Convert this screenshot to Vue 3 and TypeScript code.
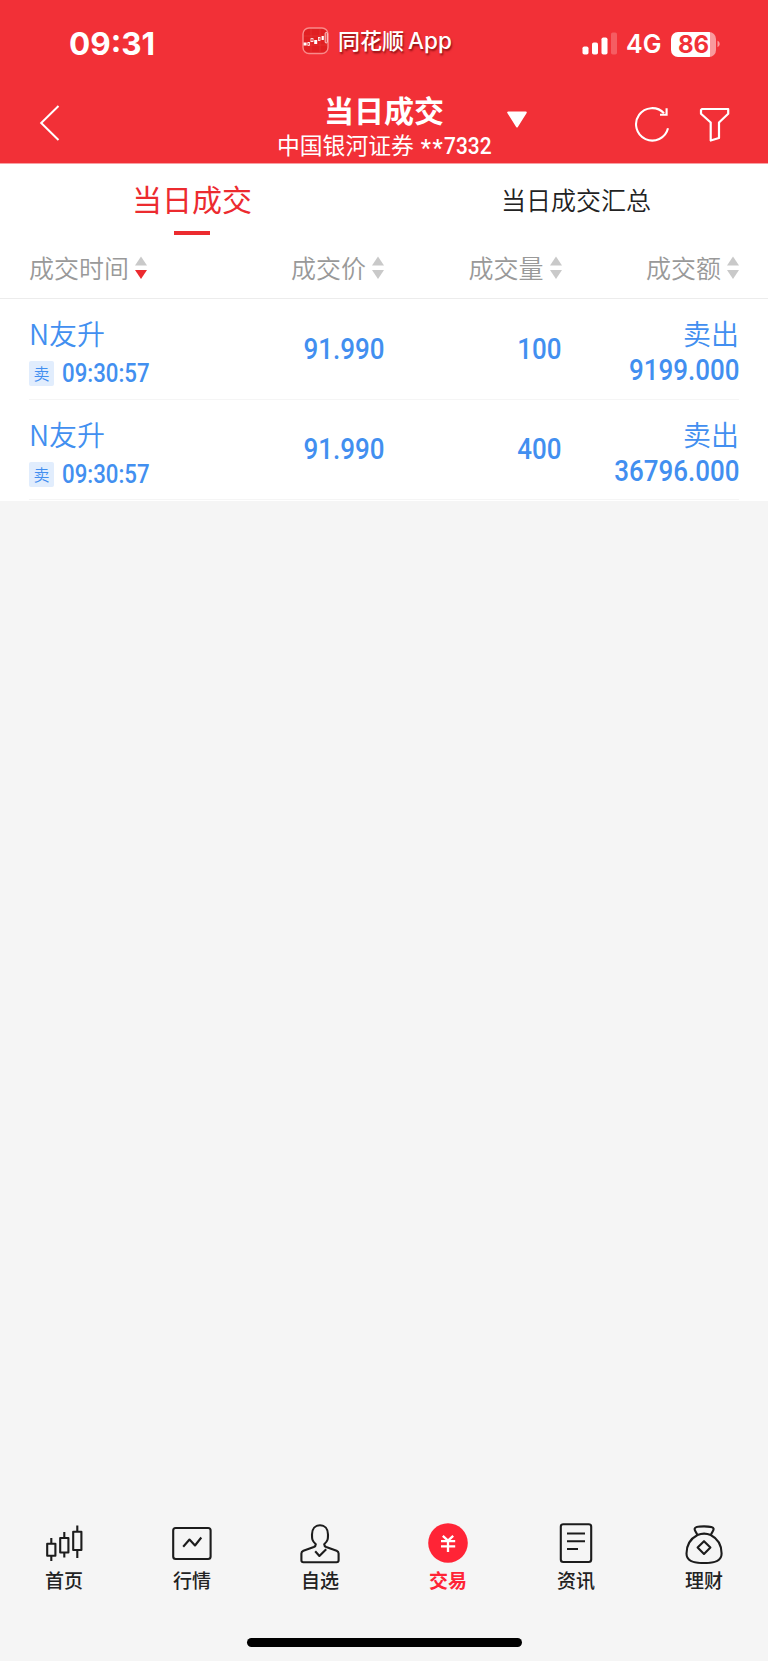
<script setup lang="ts">
import { ref } from 'vue'

interface Column {
  key: string
  label: string
}

interface Trade {
  id: number
  name: string
  side: string
  time: string
  price: string
  volume: string
  direction: string
  amount: string
}

interface NavItem {
  key: string
  label: string
}

const columns: Column[] = [
  { key: 'time', label: '成交时间' },
  { key: 'price', label: '成交价' },
  { key: 'volume', label: '成交量' },
  { key: 'amount', label: '成交额' },
]

const trades: Trade[] = [
  { id: 1, name: 'N友升', side: '卖', time: '09:30:57', price: '91.990', volume: '100', direction: '卖出', amount: '9199.000' },
  { id: 2, name: 'N友升', side: '卖', time: '09:30:57', price: '91.990', volume: '400', direction: '卖出', amount: '36796.000' },
]

const tabs: string[] = ['当日成交', '当日成交汇总']

const navItems: NavItem[] = [
  { key: 'home', label: '首页' },
  { key: 'market', label: '行情' },
  { key: 'watch', label: '自选' },
  { key: 'trade', label: '交易' },
  { key: 'news', label: '资讯' },
  { key: 'wealth', label: '理财' },
]

const activeTab = ref(0)
const activeNav = ref('trade')
const sortKey = ref('time')
</script>

<template>
  <div class="screen">
    <header class="header">
      <div class="status">
        <div class="clock">09:31</div>
        <div class="source">
          <svg class="app-icon" width="28" height="28" viewBox="0 0 28 28">
            <rect x="1" y="1" width="25" height="25.5" rx="6" fill="#e01f22" stroke="#f98a8a" stroke-width="1.4" />
            <path d="M2 9H25M2 18H25M9 2V26M18 2V26" stroke="#e8393b" stroke-width=".6" />
            <g fill="#fff">
              <rect x="1.6" y="15.5" width="3" height="3" />
              <rect x="12.2" y="13" width="3" height="4" />
              <rect x="19.6" y="9" width="2.2" height="4" />
            </g>
            <g fill="none" stroke="#fff" stroke-width=".8">
              <rect x="5.9" y="15.5" width="1.6" height="3" />
              <rect x="9" y="11.6" width="2" height="3" />
              <rect x="16.4" y="10.5" width="1.6" height="3" />
              <rect x="23.2" y="5.5" width="2" height="10.5" rx="1" />
            </g>
          </svg>
          <span class="source-cn">同花顺</span><span class="source-en">App</span>
        </div>
        <div class="indicators">
          <svg class="signal" width="36" height="24" viewBox="0 0 36 24" fill="#fff">
            <rect x="0.5" y="14.5" width="6" height="8" rx="1.8" />
            <rect x="10" y="10.5" width="6" height="12" rx="1.8" />
            <rect x="19.5" y="5.5" width="6" height="17" rx="1.8" />
            <rect x="29" y=".5" width="6" height="22" rx="1.8" opacity=".22" />
          </svg>
          <span class="network">4G</span>
          <div class="battery"><span class="level">86</span></div>
          <svg width="5" height="8" viewBox="0 0 5 8"><path d="M1.5 .8C4.4 2 4.4 6 1.5 7.2Z" fill="#f99a9d" /></svg>
        </div>
      </div>
      <div class="titlebar">
        <svg class="back" width="22" height="38" viewBox="0 0 22 38" fill="none" stroke="#fff" stroke-width="2">
          <path d="M19.5 2L2.2 19L19.5 36" />
        </svg>
        <div class="title-box">
          <h1 class="title">当日成交</h1>
          <p class="account"><span>中国银河证券</span><i class="stars">**</i><span class="account-no">7332</span></p>
        </div>
        <svg class="caret" width="24" height="20" viewBox="0 0 24 20">
          <path d="M3.2 2.5H20.8L12 16.5Z" fill="#fff" stroke="#fff" stroke-width="2" stroke-linejoin="round" />
        </svg>
        <svg class="refresh" width="38" height="38" viewBox="0 0 38 38" fill="none" stroke="#fff" stroke-width="2.1">
          <path d="M35 23.2A16.2 16.2 0 1 1 31 8.2" />
          <path d="M33.6 3.2V9.8H27" />
        </svg>
        <svg class="filter" width="32" height="36" viewBox="0 0 32 36" fill="none" stroke="#fff" stroke-width="2.2" stroke-linejoin="round">
          <path d="M3 2H29.2V6.8L20 15.5V31L11.7 33.5V15.5L2 6.8V3Z" />
        </svg>
      </div>
    </header>

    <main class="content">
      <nav class="tabs">
        <button v-for="(tab, i) in tabs" :key="tab" class="tab" :class="{ active: activeTab === i }" @click="activeTab = i">
          {{ tab }}
        </button>
      </nav>

      <div class="grid head">
        <div v-for="col in columns" :key="col.key" class="head-cell">
          <span class="head-label">{{ col.label }}</span>
          <svg class="sort" width="12" height="24" viewBox="0 0 12 24">
            <path d="M6 .5L12 9.5H0Z" fill="#c9c9c9" />
            <path d="M0 14H12L6 23Z" :fill="sortKey === col.key ? '#ec2b2f' : '#c9c9c9'" />
          </svg>
        </div>
      </div>

      <div class="rows">
        <div v-for="trade in trades" :key="trade.id" class="grid row">
          <div class="stock">
            <div class="name">{{ trade.name }}</div>
            <div class="meta"><span class="badge">{{ trade.side }}</span><span class="time">{{ trade.time }}</span></div>
          </div>
          <div class="num middle">{{ trade.price }}</div>
          <div class="num middle">{{ trade.volume }}</div>
          <div class="total">
            <div class="direction">{{ trade.direction }}</div>
            <div class="num">{{ trade.amount }}</div>
          </div>
        </div>
      </div>
    </main>

    <footer class="bottom">
      <div class="nav">
        <div v-for="item in navItems" :key="item.key" class="nav-item" :class="{ on: activeNav === item.key }">
          <svg class="nav-icon" width="44" height="44" viewBox="0 0 44 44" fill="none" stroke="#1c1c1c" stroke-width="2.1" stroke-linejoin="round">
            <g v-if="item.key === 'home'">
              <path d="M9.3 18V23.5M9.3 35.5V41M22.3 12V18M22.3 32.5V37.5M35.3 5.5V11.5M35.3 30V38" />
              <rect x="5.2" y="23.7" width="8.2" height="12" />
              <rect x="18.2" y="18" width="8.2" height="14.5" />
              <rect x="31.2" y="11.8" width="8.2" height="18.2" />
            </g>
            <g v-else-if="item.key === 'market'">
              <rect x="3.2" y="8" width="37.4" height="31" rx="2.5" />
              <path d="M13.2 26.8L19.5 19.5L25 25.5L31.3 17.5" />
            </g>
            <g v-else-if="item.key === 'watch'">
              <path d="M17.8 24.2C13.8 20.8 14 18.5 14 14.5C14 8.8 17.3 5.2 22 5.2S30 8.8 30 14.5C30 18.5 30.2 20.8 26.2 24.2C26.2 26 27 26.5 28.2 27L38.6 30.8C40 31.4 40.6 32.2 40.6 33.6V40.2Q40.6 42.2 38.6 42.2H5.4Q3.4 42.2 3.4 40.2V33.6C3.4 32.2 4 31.4 5.4 30.8L15.8 27C17 26.5 17.8 26 17.8 24.2Z" />
              <path d="M17.2 31.2L21.4 36L28.2 29.2" />
            </g>
            <g v-else-if="item.key === 'trade'">
              <circle cx="22" cy="23" r="19.8" fill="#ff2436" stroke="none" />
              <path d="M16.8 15.8L22 20.7L27.2 15.8M15 21.2H29.2M15 26.3H29.2M22 20.5V32" stroke="#fff" stroke-width="2.3" stroke-linejoin="miter" />
            </g>
            <g v-else-if="item.key === 'news'">
              <rect x="6.8" y="4.2" width="30.4" height="37.8" rx="2.5" />
              <path d="M13 13.5H31M13 21.3H31M13 29H24" />
            </g>
            <g v-else>
              <path d="M15.5 15C14.6 12.6 12.4 10.7 12.6 8.8C13 5.6 31 5.6 31.6 8.8C31.8 10.7 29.6 12.6 28.7 15C25 13.4 19.2 13.4 15.5 15C8.5 18.7 4.5 25.5 4.5 33.5C4.5 40.5 10 43 22 43S39.6 40.5 39.6 33.5C39.6 25.5 35.8 18.7 28.7 15" />
              <path d="M22 21.2L28.4 27.6L22 34L15.6 27.6Z" />
            </g>
          </svg>
          <span class="nav-label">{{ item.label }}</span>
        </div>
      </div>
      <div class="home-indicator"></div>
    </footer>
  </div>
</template>

<style>
body {
  margin: 0;
  background: #fff;
}
</style>

<style scoped>
.screen {
  width: 768px;
  height: 1661px;
  display: flex;
  flex-direction: column;
  background: #f5f5f5;
  font-family: 'Noto Sans CJK SC', sans-serif;
  overflow: hidden;
}

.header {
  height: 163px;
  flex: none;
  background: #f23037;
  color: #fff;
  border-bottom: 1px solid #f8a0a3;
  box-sizing: content-box;
}

.status {
  height: 86px;
  display: grid;
  grid-template-columns: 302px 1fr 187px;
}

.clock {
  padding: 25px 0 0 69px;
  font: 700 31.5px/38px Inter, sans-serif;
}

.source {
  display: flex;
  align-items: flex-start;
  height: 32px;
  margin-top: 25px;
  text-shadow: 1px 2px 2px rgba(90, 0, 0, 0.65);
  font-weight: 500;
}

.app-icon {
  flex: none;
  margin-top: 2px;
}

.source-cn {
  margin-left: 8px;
  font-size: 22px;
  line-height: 28px;
}

.source-en {
  margin-left: 4px;
  font: 500 22.5px/32px Inter, sans-serif;
}

.indicators {
  display: flex;
  align-items: center;
  height: 32px;
  margin-top: 28px;
}

.signal {
  margin-left: 1px;
}

.network {
  width: 53px;
  padding-left: 8px;
  box-sizing: border-box;
  font: 600 25px/32px Inter, sans-serif;
}

.battery {
  width: 45px;
  height: 25px;
  border-radius: 7px;
  background: linear-gradient(to right, #fff 39px, #f99a9d 39px);
  display: flex;
  justify-content: center;
}

.level {
  color: #f23037;
  font: 700 24px/25px Inter, sans-serif;
}

.titlebar {
  height: 77px;
  display: flex;
  align-items: flex-start;
}

.back {
  margin: 18px 0 0 39px;
}

.title-box {
  width: 232px;
  margin-left: 207px;
}

.title {
  margin: 5px 0 0;
  font-size: 30px;
  line-height: 36px;
  font-weight: 700;
  text-align: center;
}

.account {
  margin: 2px 0 0 9px;
  display: flex;
  font-size: 22.8px;
  line-height: 32px;
  white-space: nowrap;
}

.stars {
  margin: 4px 0 0 7px;
  font: 500 23px/32px Roboto, sans-serif;
  letter-spacing: 1.5px;
}

.account-no {
  font: 500 23.5px/34px Roboto, sans-serif;
  transform: scaleX(0.89);
  transform-origin: left;
}

.caret {
  margin: 24px 0 0 5px;
}

.refresh {
  margin: 19px 0 0 104px;
}

.filter {
  margin: 21px 0 0 28px;
}

.content {
  flex: none;
  background: #fff;
}

.tabs {
  height: 74px;
  display: grid;
  grid-template-columns: 1fr 1fr;
}

.tab {
  display: flex;
  flex-direction: column;
  align-items: center;
  border: 0;
  padding: 16px 0 0;
  background: none;
  font-family: inherit;
  font-size: 25px;
  font-weight: 350;
  line-height: 38px;
  color: #222;
}

.tab.active {
  padding-top: 15px;
  font-size: 30px;
  font-weight: 400;
  color: #ec2b2f;
}

.tab.active::after {
  content: '';
  width: 36px;
  height: 4px;
  margin-top: 14px;
  background: #ec2b2f;
}

.grid {
  display: grid;
  grid-template-columns: repeat(4, 177.5px);
}

.head {
  height: 60px;
  padding: 0 29px;
  border-bottom: 1px solid #ececec;
  color: #999;
  font-size: 25px;
  font-weight: 350;
}

.head-cell {
  display: flex;
  justify-content: flex-end;
  align-items: center;
  height: 60px;
}

.head-cell:first-child {
  justify-content: flex-start;
}

.head-label {
  padding-bottom: 3px;
}

.sort {
  margin-left: 6px;
}

.rows {
  padding: 0 29px 1px;
}

.row {
  height: 100.5px;
  border-bottom: 1px solid #f5f5f5;
  box-sizing: border-box;
  color: #428ff0;
}

.name,
.direction {
  font-size: 28px;
  font-weight: 350;
  line-height: 40px;
}

.stock {
  padding-top: 14px;
}

.meta {
  display: flex;
  align-items: center;
  margin-top: 8px;
  height: 25px;
}

.badge {
  width: 25px;
  height: 25px;
  border-radius: 2px;
  background: #e1edfd;
  font-size: 16px;
  line-height: 24px;
  font-weight: 350;
  text-align: center;
}

.time {
  margin-left: 8px;
  font: 500 25px/25px Roboto, sans-serif;
  transform: scaleX(0.89);
  transform-origin: left;
}

.num {
  font: 500 29px/34px Roboto, sans-serif;
  text-align: right;
  transform: scaleX(0.895);
  transform-origin: right;
}

.middle {
  padding-top: 32.5px;
}

.total {
  padding-top: 14px;
  text-align: right;
}

.bottom {
  margin-top: auto;
  height: 141px;
  flex: none;
}

.nav {
  height: 118px;
  display: grid;
  grid-template-columns: repeat(6, 1fr);
}

.nav-item {
  display: flex;
  flex-direction: column;
  align-items: center;
}

.nav-label {
  margin-top: 2px;
  font-size: 19px;
  line-height: 28px;
  font-weight: 500;
  color: #222;
}

.on .nav-label {
  font-weight: 700;
  color: #ff2436;
}

.home-indicator {
  width: 275px;
  height: 9px;
  margin: 0 auto;
  border-radius: 5px;
  background: #000;
}
</style>
